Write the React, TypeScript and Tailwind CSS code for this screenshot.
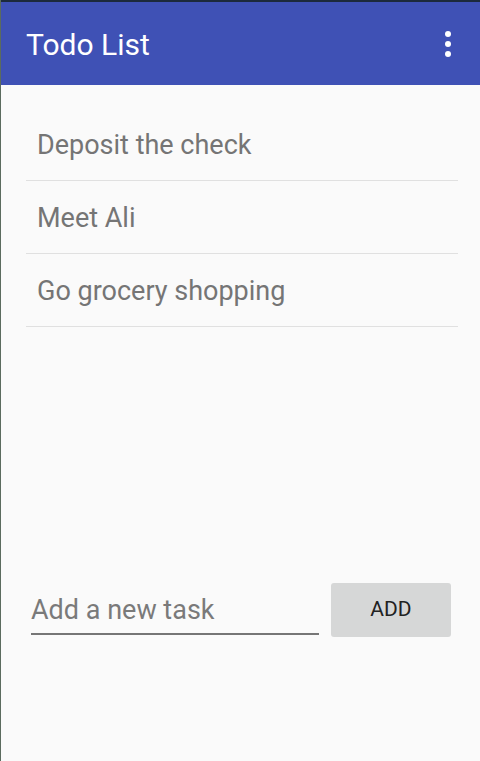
import React, { useState } from 'react'

const tasks = ['Deposit the check', 'Meet Ali', 'Go grocery shopping']

export default function App() {
  const [items, setItems] = useState<string[]>(tasks)
  const [text, setText] = useState('')

  const add = () => {
    if (!text.trim()) return
    setItems([...items, text.trim()])
    setText('')
  }

  return (
    <div className="w-[480px] h-[761px] flex flex-col bg-[#fafafa] border-l border-[#5b6b5e] font-['Roboto','Liberation_Sans',sans-serif]">
      <header className="h-[85px] shrink-0 flex items-center justify-between bg-[#3f51b5] border-t-2 border-[#1c2a3c] pl-[25px] pr-[29px]">
        <h1 className="text-[30px] leading-none text-white pt-[2px]">Todo List</h1>
        <button className="flex flex-col gap-[4px] items-center">
          <span className="w-[6px] h-[6px] rounded-full bg-white" />
          <span className="w-[6px] h-[6px] rounded-full bg-white" />
          <span className="w-[6px] h-[6px] rounded-full bg-white" />
        </button>
      </header>

      <ul className="mx-[25px] mt-[23px] w-[432px]">
        {items.map((t) => (
          <li key={t} className="h-[73px] flex items-center pl-[11px] pt-[2px] border-b border-[#e0e0e0] text-[27px] text-[#757575]">
            {t}
          </li>
        ))}
      </ul>

      <div className="flex-1" />

      <div className="flex items-center pl-[30px] pr-[28px] mb-[124px] gap-[12px]">
        <input
          value={text}
          onChange={(e) => setText(e.target.value)}
          placeholder="Add a new task"
          className="w-[288px] h-[50px] pt-[2px] bg-transparent outline-none border-b-2 border-[#767676] text-[27px] text-[#444] placeholder:text-[#7a7a7a]"
        />
        <button onClick={add} className="w-[120px] h-[54px] rounded-[3px] bg-[#d6d7d7] text-[21px] text-[#222]">
          ADD
        </button>
      </div>
    </div>
  )
}
